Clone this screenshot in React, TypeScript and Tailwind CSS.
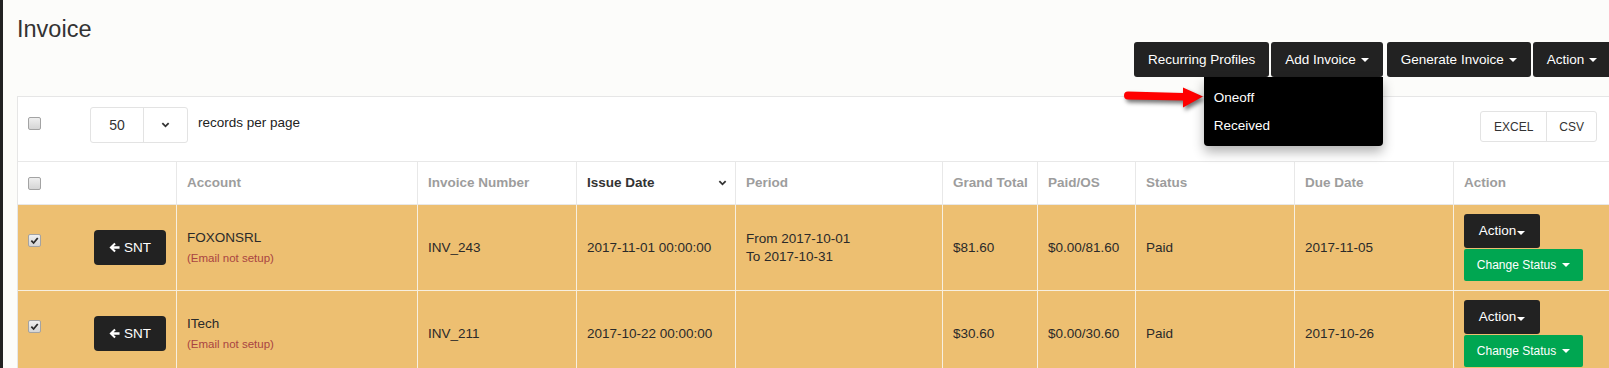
const cols = 'grid grid-cols-[158px_241px_159px_159px_207px_95px_98px_159px_159px_167px]';

const rows = [
  {
    account: 'FOXONSRL',
    inv: 'INV_243',
    issue: '2017-11-01 00:00:00',
    period: ['From 2017-10-01', 'To 2017-10-31'],
    total: '$81.60',
    paid: '$0.00/81.60',
    status: 'Paid',
    due: '2017-11-05',
  },
  {
    account: 'ITech',
    inv: 'INV_211',
    issue: '2017-10-22 00:00:00',
    period: [],
    total: '$30.60',
    paid: '$0.00/30.60',
    status: 'Paid',
    due: '2017-10-26',
  },
];

function Box({ checked = false }: { checked?: boolean }) {
  return (
    <span className="inline-flex h-[13px] w-[13px] shrink-0 items-center justify-center rounded-[2px] border border-[#a3a3a3] bg-linear-to-b from-[#efefef] to-[#d5d5d5]">
      {checked && (
        <svg viewBox="0 0 10 10" className="h-[9px] w-[9px]">
          <path d="M1.5 5.2 L4 7.8 L8.6 2.2" stroke="#2b2b2b" strokeWidth="2" fill="none" />
        </svg>
      )}
    </span>
  );
}

function Caret({ color = 'border-t-white', cls = 'ml-[5px]' }: { color?: string; cls?: string }) {
  return <span className={`inline-block h-0 w-0 border-x-[4px] border-t-[4px] border-x-transparent ${color} ${cls}`} />;
}

function Chevron() {
  return (
    <svg viewBox="0 0 10 6" className="h-[6px] w-[9px]">
      <path d="M1.5 1 L5 4.5 L8.5 1" stroke="#333" strokeWidth="2" fill="none" />
    </svg>
  );
}

// chunky left arrow like the old icon font
function ArrowLeft() {
  return (
    <svg viewBox="0 0 12 12" className="h-[11px] w-[11px]">
      <path d="M0.5 6 L5.8 0.8 L7.4 2.4 L5 4.6 L11.5 4.6 L11.5 7.4 L5 7.4 L7.4 9.6 L5.8 11.2 Z" fill="#fff" />
    </svg>
  );
}

export default function App() {
  return (
    <div className="relative h-[368px] w-[1609px] overflow-hidden border-l-[3px] border-[#222] bg-[#fcfcfa] font-['Liberation_Sans',Arial,sans-serif] text-[13.5px] leading-[18px] text-[#333]">
      <div className="pl-[14px]">
        <h1 className="pt-[17px] text-[23.5px] font-normal leading-[25px] text-[#333]">Invoice</h1>

        {/* top buttons */}
        <div className="flex w-[1700px]">
          <div className="ml-[1117px] flex h-[35px] shrink-0 whitespace-nowrap text-white">
            <button className="h-full rounded-[3px] bg-[#222] px-[14px]">Recurring Profiles</button>
            <div className="relative ml-[2px] h-full">
              <button className="flex h-full items-center rounded-[3px] bg-[#222] px-[14px]">
                Add Invoice
                <Caret />
              </button>
              <div className="absolute right-0 top-full z-10 w-[179px] rounded-b-[4px] bg-black pb-[6px] pt-[7px] shadow-[0_6px_12px_rgba(0,0,0,0.3)]">
                <div className="h-[28px] px-[10px] leading-[28px]">Oneoff</div>
                <div className="h-[28px] px-[10px] leading-[28px]">Received</div>
              </div>
            </div>
            <button className="ml-[4px] flex h-full items-center rounded-[3px] bg-[#222] px-[14px]">
              Generate Invoice
              <Caret />
            </button>
            <button className="ml-[2px] flex h-full items-center rounded-[3px] bg-[#222] px-[14px]">
              Action
              <Caret />
            </button>
          </div>
        </div>

        {/* panel */}
        <div className="mt-[19px] w-[1603px] border border-[#e6e6e6] bg-white">
          <div className="flex h-[65px] items-start border-b border-[#e8e8e8] px-[10px] pt-[10px]">
            <span className="mt-[10px] flex">
              <Box />
            </span>
            <div className="ml-[49px] flex h-[36px] w-[98px] rounded-[3px] border border-[#e3e3e3]">
              <div className="flex w-[53px] items-center justify-center border-r border-[#e3e3e3] text-[14px]">50</div>
              <div className="flex flex-1 items-center justify-center">
                <Chevron />
              </div>
            </div>
            <span className="ml-[10px] mt-[7px] text-[#222]">records per page</span>
            <div className="ml-auto mr-[12px] mt-[4px] flex h-[31px] rounded-[3px] border border-[#e3e3e3] text-[12px] text-[#333]">
              <div className="flex items-center border-r border-[#e3e3e3] px-[13px]">EXCEL</div>
              <div className="flex items-center px-[12px]">CSV</div>
            </div>
          </div>

          {/* header */}
          <div className={`${cols} h-[43px] border-b border-[#e8e8e8] font-bold text-[#9d9d9d]`}>
            <div className="flex items-center px-[10px]">
              <Box />
            </div>
            <div className="flex items-center border-l border-[#e8e8e8] px-[10px]">Account</div>
            <div className="flex items-center border-l border-[#e8e8e8] px-[10px]">Invoice Number</div>
            <div className="flex items-center justify-between border-l border-[#e8e8e8] pl-[10px] pr-[8px] text-[#333]">
              Issue Date
              <Chevron />
            </div>
            <div className="flex items-center border-l border-[#e8e8e8] px-[10px]">Period</div>
            <div className="flex items-center whitespace-nowrap border-l border-[#e8e8e8] px-[10px]">Grand Total</div>
            <div className="flex items-center border-l border-[#e8e8e8] px-[10px]">Paid/OS</div>
            <div className="flex items-center border-l border-[#e8e8e8] px-[10px]">Status</div>
            <div className="flex items-center border-l border-[#e8e8e8] px-[10px]">Due Date</div>
            <div className="flex items-center border-l border-[#e8e8e8] px-[10px]">Action</div>
          </div>

          {rows.map((r) => (
            <div key={r.inv} className={`${cols} h-[86px] border-b border-[#f7efe0] bg-[#edbf71] text-[#2a2a2a]`}>
              <div className="flex items-center px-[10px]">
                <span className="-mt-[14px] flex">
                  <Box checked />
                </span>
                <button className="ml-[53px] flex h-[35px] w-[75px] items-center justify-center gap-[4px] rounded-[4px] bg-[#222] text-white">
                  <ArrowLeft />
                  SNT
                </button>
              </div>
              <div className="flex flex-col justify-center border-l border-[#f7efe0] px-[10px]">
                <div>{r.account}</div>
                <div className="mt-[3px] text-[11.5px] leading-[16px] text-[#a94442]">(Email not setup)</div>
              </div>
              <div className="flex items-center border-l border-[#f7efe0] px-[10px]">{r.inv}</div>
              <div className="flex items-center border-l border-[#f7efe0] px-[10px]">{r.issue}</div>
              <div className="flex flex-col justify-center border-l border-[#f7efe0] px-[10px] leading-[17.5px]">
                {r.period.map((p) => (
                  <div key={p}>{p}</div>
                ))}
              </div>
              <div className="flex items-center border-l border-[#f7efe0] px-[10px]">{r.total}</div>
              <div className="flex items-center border-l border-[#f7efe0] px-[10px]">{r.paid}</div>
              <div className="flex items-center border-l border-[#f7efe0] px-[10px]">{r.status}</div>
              <div className="flex items-center border-l border-[#f7efe0] px-[10px]">{r.due}</div>
              <div className="flex flex-col items-start justify-center border-l border-[#f7efe0] px-[10px]">
                <button className="flex h-[34px] w-[76px] items-center justify-center rounded-[3px] bg-[#222] text-white">
                  Action
                  <Caret cls="ml-[1px] mt-[3px]" />
                </button>
                <button className="mt-[1px] flex h-[32px] w-[119px] items-center justify-center rounded-[2px] bg-[#00a651] text-[12px] text-white">
                  Change Status
                  <Caret cls="ml-[6px]" />
                </button>
              </div>
            </div>
          ))}
        </div>
      </div>

      {/* red annotation arrow */}
      <svg
        className="absolute left-[1116px] top-[82px] h-[32px] w-[90px] drop-shadow-[2px_3px_2px_rgba(0,0,0,0.55)]"
        viewBox="0 0 90 32"
      >
        <path d="M9 9.5 L64 11 L64 5.5 L84 14.5 L64 25.5 L64 18.5 L9 17.5 A4 4 0 0 1 9 9.5 Z" fill="#ff0000" />
      </svg>
    </div>
  );
}
